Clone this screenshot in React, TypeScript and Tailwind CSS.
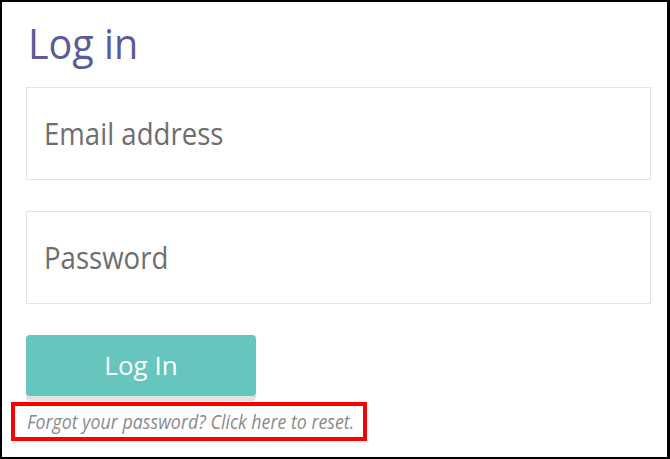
import React from "react";

export default function App() {
  return (
    <div className="w-[670px] h-[459px] bg-white border-l-2 border-t-2 border-r-[3px] border-b-2 border-black box-border overflow-hidden" style={{ fontFamily: "'Open Sans', sans-serif" }}>
      <div className="pl-6 pr-4 flex flex-col">
        <h1 className="text-[42px] leading-[42px] mt-[20px] ml-[2px] text-[#5b5b9b] font-normal">
          <span className="inline-block origin-left scale-x-[0.94]">Log in</span>
        </h1>
        <div className="mt-[23px] h-[93px] border border-[#e3e3e3] flex items-center pl-[17px]">
          <span className="inline-block origin-left scale-x-[0.89] text-[31px] text-[#6e6e6e]">Email address</span>
        </div>
        <div className="mt-[31px] h-[93px] border border-[#e3e3e3] flex items-center pl-[17px]">
          <span className="inline-block origin-left scale-x-[0.89] text-[31px] text-[#6e6e6e]">Password</span>
        </div>
        <div className="mt-[31px] w-[230px] h-[61px] rounded-[4px] bg-[#66c5bd] shadow-[0_5px_0_#e2e2e2] flex items-center justify-center">
          <span className="text-[26px] text-white">Log In</span>
        </div>
        <div className="mt-[6px] -ml-[15px] w-[356px] h-[39px] border-4 border-[#ff0000] flex items-center pl-[12px]">
          <span className="inline-block origin-left scale-x-[0.89] text-[20px] italic text-[#8a8a8a] whitespace-nowrap">Forgot your password? Click here to reset.</span>
        </div>
      </div>
    </div>
  );
}
